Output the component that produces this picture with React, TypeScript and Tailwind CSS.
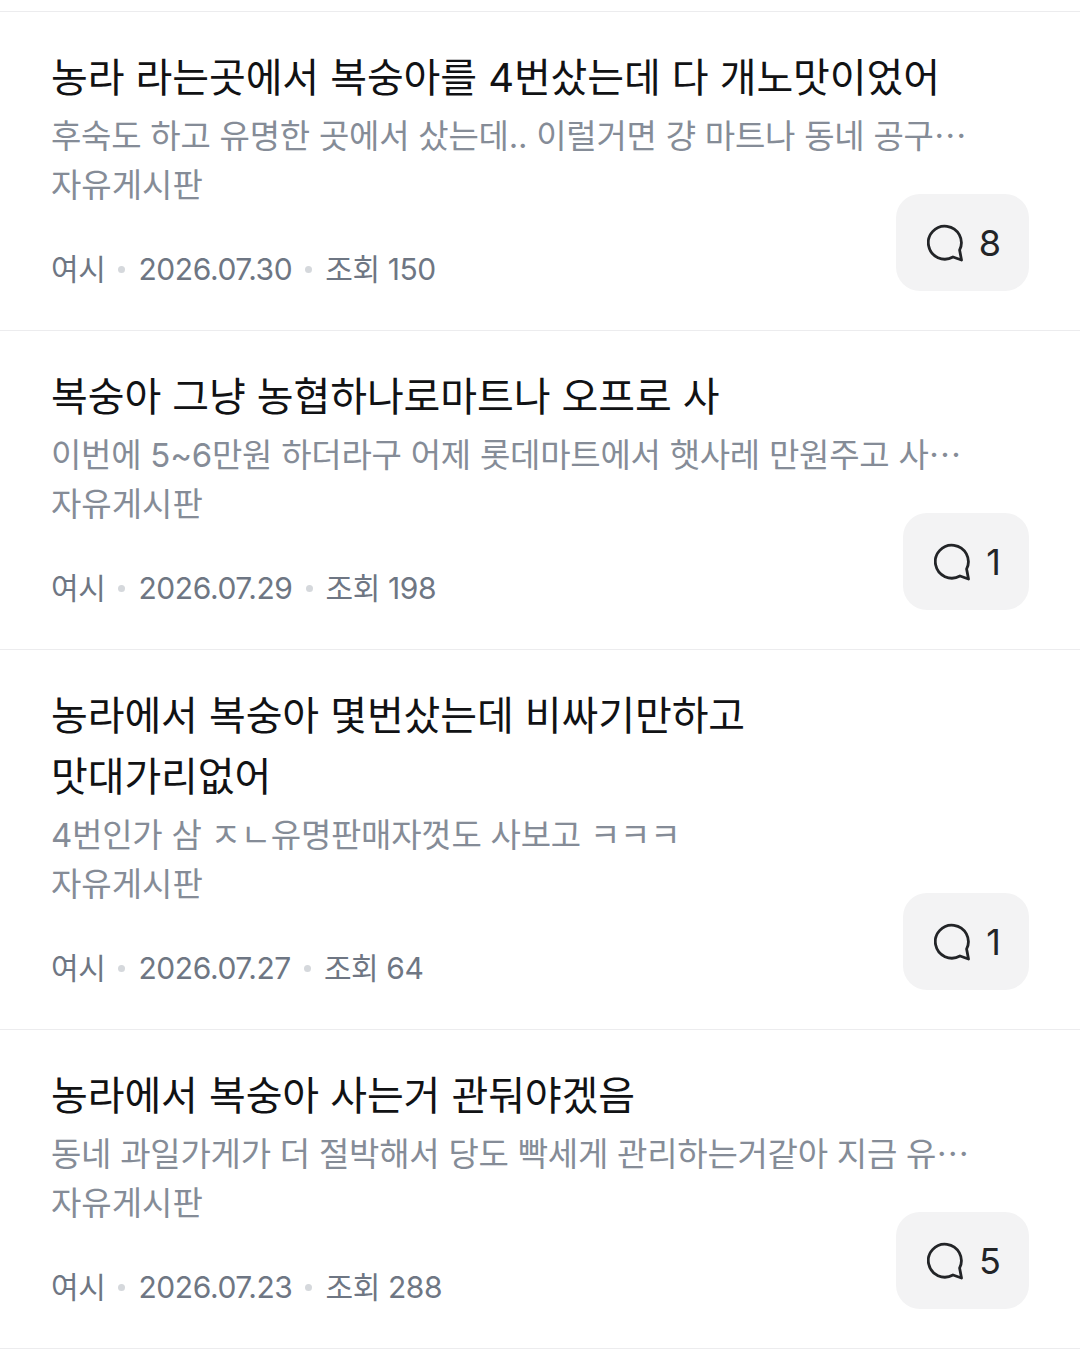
const posts = [
  { title: "농라 라는곳에서 복숭아를 4번샀는데 다 개노맛이었어", body: "후숙도 하고 유명한 곳에서 샀는데.. 이럴거면 걍 마트나 동네 공구", more: true, date: "2026.07.30", views: 150, comments: 8 },
  { title: "복숭아 그냥 농협하나로마트나 오프로 사", body: "이번에 5~6만원 하더라구 어제 롯데마트에서 햇사레 만원주고 사", more: true, date: "2026.07.29", views: 198, comments: 1 },
  { title: "농라에서 복숭아 몇번샀는데 비싸기만하고\n맛대가리없어", body: "4번인가 삼 ㅈㄴ유명판매자껏도 사보고 ㅋㅋㅋ", more: false, date: "2026.07.27", views: 64, comments: 1 },
  { title: "농라에서 복숭아 사는거 관둬야겠음", body: "동네 과일가게가 더 절박해서 당도 빡세게 관리하는거같아 지금 유", more: true, date: "2026.07.23", views: 288, comments: 5 },
]

function CommentIcon() {
  return (
    <svg width="38" height="38" viewBox="0 0 38 38" fill="none" stroke="#222427" strokeWidth="2.8" strokeLinejoin="round">
      <path d="M26 33A16.5 16.5 0 1 1 32.6 26L34.5 36Z" />
    </svg>
  )
}

export default function App() {
  return (
    <div className="h-[1349px] overflow-hidden bg-white pt-[11px] font-['Inter','Noto_Sans_CJK_KR',sans-serif]">
      {posts.map((post) => (
        <div key={post.date} className="border-t border-[#ececee] px-[51px] pt-[35px] pb-[39px] last:border-b">
          <div className="whitespace-pre-line text-[40px] leading-[61px] tracking-[-0.1px] text-[#111214]">{post.title}</div>
          <div className="mt-[4px] whitespace-nowrap text-[33px] leading-[49px] tracking-[-0.25px] text-[#858c97]">
            {post.body}
            {/* CJK ellipsis sits at mid height, Inter's doesn't */}
            {post.more && <span className="font-['Noto_Sans_CJK_KR'] leading-none">…</span>}
          </div>
          <div className="flex items-end justify-between">
            <div>
              <div className="text-[33px] leading-[49px] text-[#858c97]">자유게시판</div>
              <div className="mt-[37px] flex items-center text-[30px] leading-[44px] tracking-[-0.4px] text-[#6e7683]">
                <span>여시</span>
                <span className="mx-[13px] size-[7px] rounded-full bg-[#d5d8dc]" />
                <span>{post.date}</span>
                <span className="mx-[13px] size-[7px] rounded-full bg-[#d5d8dc]" />
                <span>조회 {post.views}</span>
              </div>
            </div>
            <div className="flex h-[97px] items-center gap-[14px] rounded-[24px] bg-[#f3f3f4] pr-[28px] pl-[31px]">
              <CommentIcon />
              <span className="text-[36px] text-[#222427]">{post.comments}</span>
            </div>
          </div>
        </div>
      ))}
    </div>
  )
}
